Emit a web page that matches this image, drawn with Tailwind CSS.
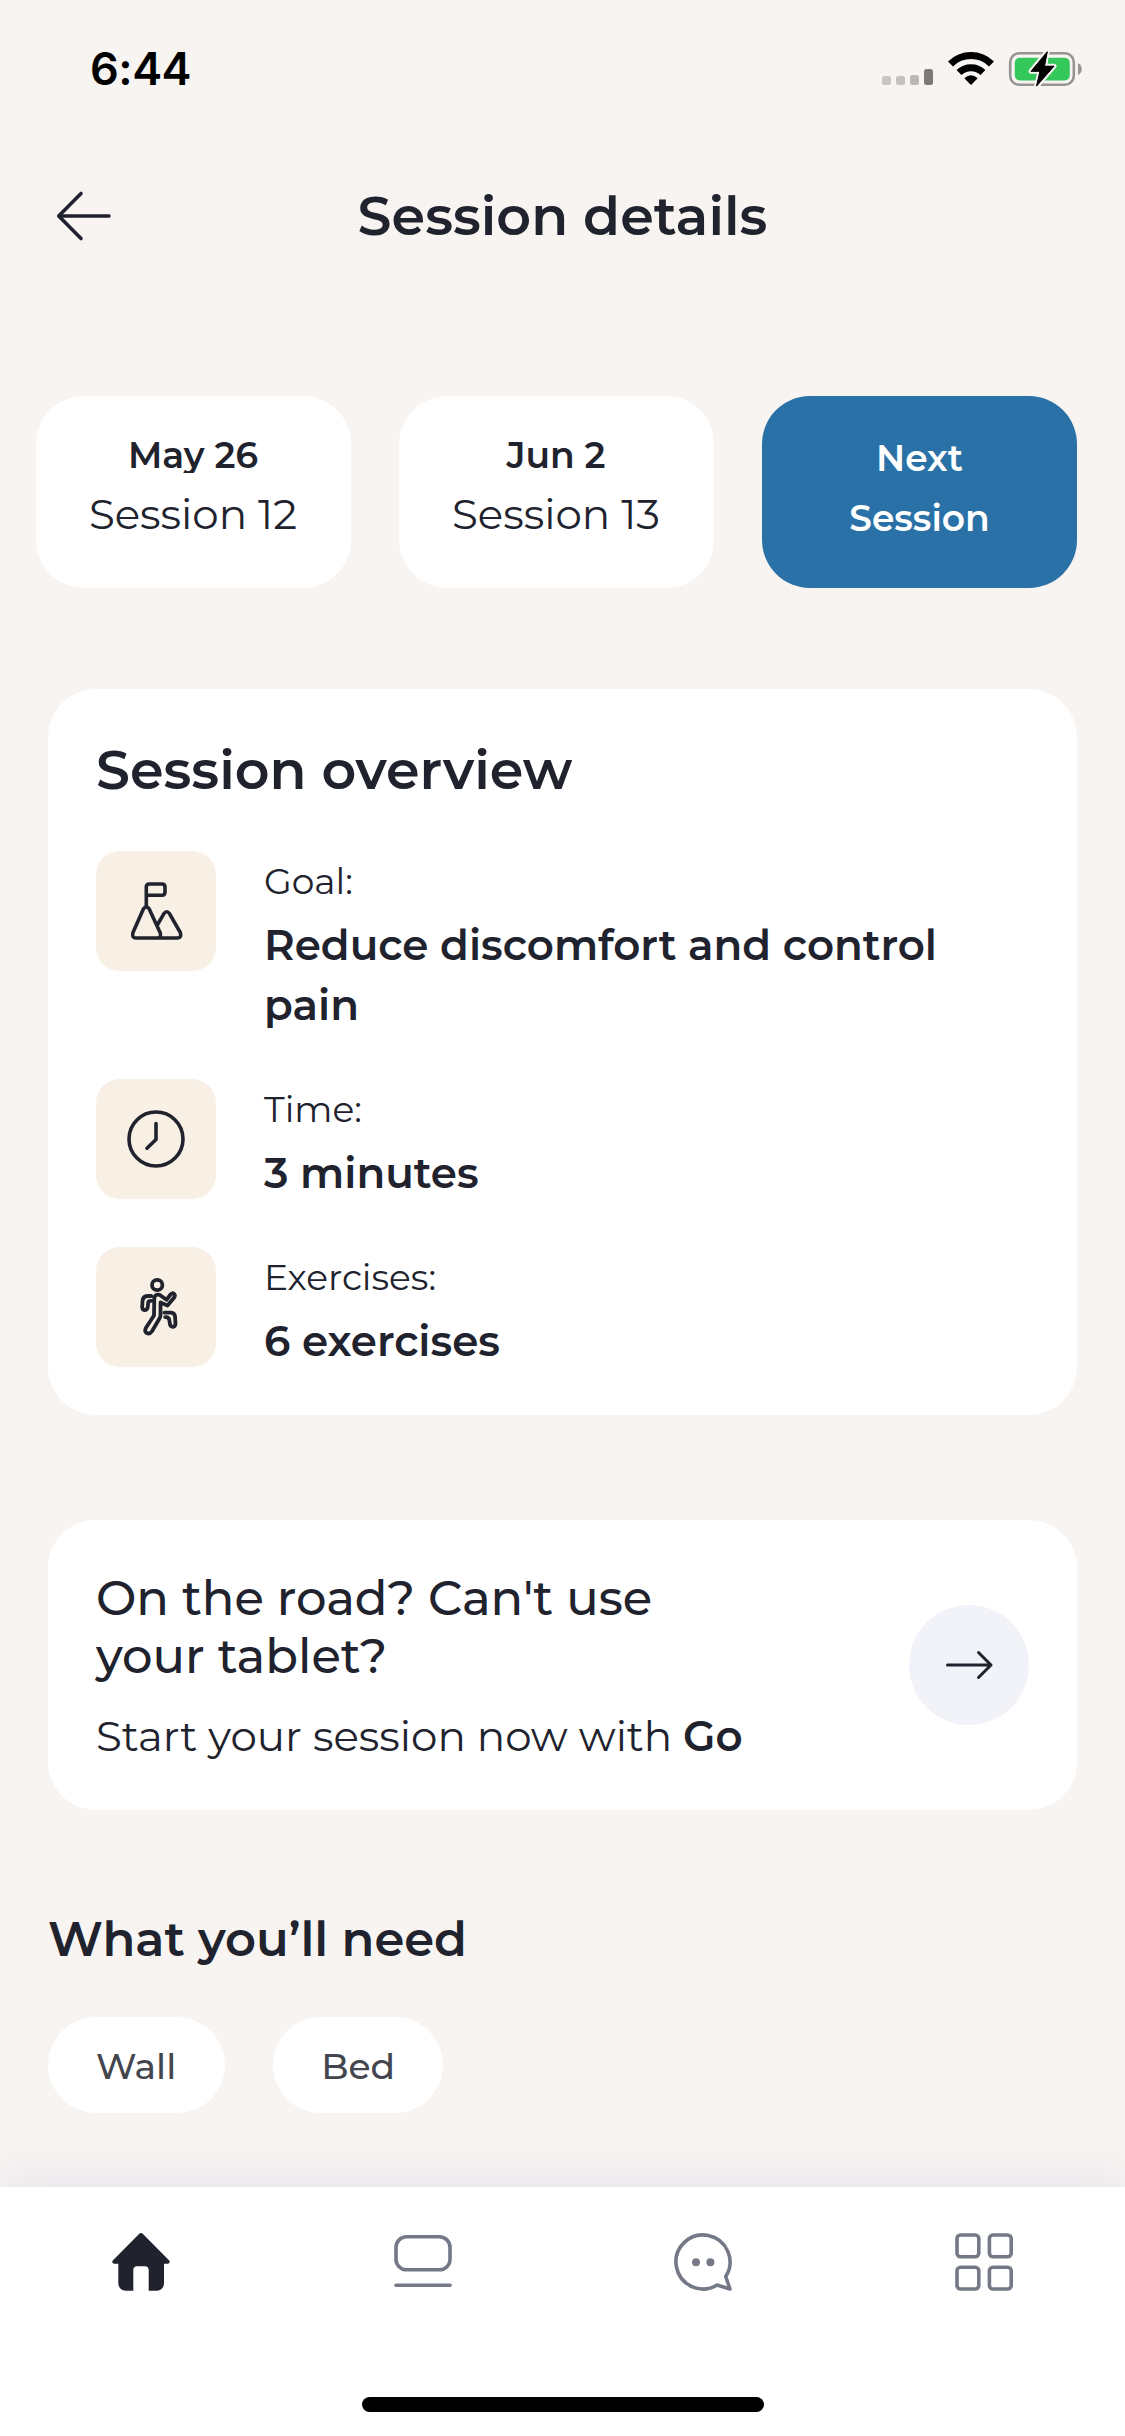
<!DOCTYPE html>
<html lang="en">
<head>
<meta charset="utf-8">
<title>Session details</title>
<script src="https://cdn.jsdelivr.net/npm/@tailwindcss/browser@4"></script>
</head>
<body class="bg-[#f7f4f2]">
<div class="w-[1125px] h-[2436px] flex flex-col overflow-hidden bg-[#f7f4f2] text-[#20222d] font-['Montserrat','Inter',sans-serif]">

  <!-- Status bar -->
  <div class="h-[132px] shrink-0 flex items-start justify-between pl-[90px] pr-[41px]">
    <div class="mt-[39px] text-[45px] leading-[60px] font-semibold tracking-[-0.5px] text-black font-['Inter',sans-serif]">6:44</div>
    <svg class="mt-[50px]" width="204" height="38" viewBox="880 50 204 38" fill="none">
      <rect x="882" y="76" width="9" height="9" rx="2.5" fill="#c8c5c4"/>
      <rect x="896" y="76" width="9" height="9" rx="2.5" fill="#c4c1c0"/>
      <rect x="910" y="75" width="9" height="10" rx="2.5" fill="#bbb8b7"/>
      <rect x="924" y="69" width="9" height="16" rx="2.5" fill="#7c7a79"/>
      <path d="M950.5 64A29 29 0 0 1 991.5 64M959 72.5A17.5 17.5 0 0 1 983 72.5" stroke="#000" stroke-width="7"/>
      <path d="M971 85L964.3 78.3Q971 72 977.7 78.3Z" fill="#000"/>
      <rect x="1010.2" y="53.2" width="63.6" height="31.6" rx="9" stroke="#979594" stroke-width="2.6"/>
      <path d="M1078 63.2A6.5 6.5 0 0 1 1078 75Z" fill="#979594"/>
      <rect x="1014.8" y="57.8" width="55" height="22.6" rx="5" fill="#34c759"/>
      <path d="M1047.3 51.5L1031 71.3H1040L1036.5 86.5L1054 66.2H1044.5Z" fill="#000" stroke="#f7f4f2" stroke-width="5" stroke-linejoin="round" paint-order="stroke"/>
      <path d="M1047.3 51.8L1031 71.3H1040L1036.5 86L1054 66.2H1044.5Z" fill="#000" stroke="#000" stroke-width="1" stroke-linejoin="round"/>
    </svg>
  </div>

  <!-- Header -->
  <header class="h-[168px] shrink-0 grid grid-cols-[120px_1fr_120px] items-center">
    <svg class="ml-12" width="72" height="72" viewBox="0 0 72 72" fill="none" stroke="currentColor" stroke-width="3.6" stroke-linecap="round" stroke-linejoin="round"><path d="M61 36H11M33 13.5L10.7 36L33 58.5"/></svg>
    <h1 class="text-center text-[54px] leading-[66px] font-semibold">Session details</h1>
  </header>

  <!-- Session picker -->
  <div class="mt-24 h-48 shrink-0 flex gap-12 px-9 text-center">
    <div class="w-[315px] rounded-[48px] bg-white pt-[41px] pr-px">
      <div class="h-9 overflow-hidden text-[36px] leading-[36px] font-semibold">May 26</div>
      <div class="mt-[11px] text-[42px] leading-[60px] font-normal">Session 12</div>
    </div>
    <div class="w-[315px] rounded-[48px] bg-white pt-[41px] pr-px">
      <div class="h-9 overflow-hidden text-[36px] leading-[36px] font-semibold">Jun 2</div>
      <div class="mt-[11px] text-[42px] leading-[60px] font-normal">Session 13</div>
    </div>
    <div class="w-[315px] rounded-[48px] bg-[#2971a7] px-12 pt-8 text-[36px] leading-[60px] font-semibold text-white">Next Session</div>
  </div>

  <!-- Overview -->
  <section class="mt-[101px] mx-12 h-[726px] shrink-0 rounded-[48px] bg-white p-12">
    <h2 class="text-[54px] leading-[66px] font-semibold">Session overview</h2>
    <div class="mt-12 flex flex-col gap-12">
      <div class="h-[180px] flex gap-12">
        <div class="size-[120px] shrink-0 rounded-3xl bg-[#f8f0e4] flex items-center justify-center">
          <svg width="72" height="72" viewBox="0 0 72 72" fill="none" stroke="currentColor" stroke-width="3.6" stroke-linecap="round" stroke-linejoin="round"><path d="M26.3 32V12Q26.3 9 29.3 9H42Q45 9 45 12V17.2Q45 20.2 42 20.2H26.5M23.6 33.6L13 57.5Q11.6 62.8 16 63H37Q41.5 62.8 40.3 58L29 33.6Q26.3 30.3 23.6 33.6ZM37.3 50L43.8 38.8Q46.7 34.7 49.6 38.8L60.3 57.5Q62 62.6 57.5 63H37"/></svg>
        </div>
        <div class="leading-[60px]">
          <div class="text-[36px] font-normal">Goal:</div>
          <div class="mt-1 text-[42px] font-semibold">Reduce discomfort and control pain</div>
        </div>
      </div>
      <div class="h-[120px] flex gap-12">
        <div class="size-[120px] shrink-0 rounded-3xl bg-[#f8f0e4] flex items-center justify-center">
          <svg width="72" height="72" viewBox="0 0 72 72" fill="none" stroke="currentColor" stroke-width="3.6" stroke-linecap="round" stroke-linejoin="round"><circle cx="36" cy="36" r="27"/><path d="M36 20.5V36.5L27 45.3"/></svg>
        </div>
        <div class="leading-[60px]">
          <div class="text-[36px] font-normal">Time:</div>
          <div class="mt-1 text-[42px] font-semibold">3 minutes</div>
        </div>
      </div>
      <div class="h-[120px] flex gap-12">
        <div class="size-[120px] shrink-0 rounded-3xl bg-[#f8f0e4] flex items-center justify-center">
          <svg width="72" height="72" viewBox="0 0 72 72" fill="none" stroke="currentColor" stroke-width="3.8" stroke-linecap="round" stroke-linejoin="round"><circle cx="37.2" cy="14" r="5.2"/><path d="M34.3 27Q35 22.8 39.5 23.8L46.5 28.8L50.5 23.5Q52.5 21.3 54.2 23Q55.6 24.6 54 26.8L47.5 34.5L40.5 31.5V44.5Q40.3 46.5 39 48.3L32 60.3Q29.6 63.8 26.3 61.8Q24.3 60 25.8 57L34 44.5ZM31.2 25H27.5Q23 25.2 22.5 30L22.2 36.2Q22.6 39.2 25 39.2Q27.6 38.8 27.8 35.5L28.2 31.5Q28.6 29.6 31 29.8M44.5 41.7H51Q54.8 42 55.1 45.8L55.5 52.8Q55.2 55.8 52.6 55.8Q49.9 55.4 49.8 52L49.2 48.5Q48.6 46 45.2 46.2"/></svg>
        </div>
        <div class="leading-[60px]">
          <div class="text-[36px] font-normal">Exercises:</div>
          <div class="mt-1 text-[42px] font-semibold">6 exercises</div>
        </div>
      </div>
    </div>
  </section>

  <!-- Go banner -->
  <section class="mt-[105px] mx-12 h-[290px] shrink-0 rounded-[48px] bg-white px-12 flex items-center justify-between">
    <div class="w-[700px] pt-1">
      <div class="w-[600px] text-[48px] leading-[58px] font-medium">On the road? Can't use your tablet?</div>
      <div class="mt-[21px] text-[42px] leading-[60px] font-normal">Start your session now with <b class="font-semibold">Go</b></div>
    </div>
    <div class="size-[120px] rounded-full bg-[#f2f3f8] flex items-center justify-center">
      <svg width="60" height="60" viewBox="0 0 60 60" fill="none" stroke="currentColor" stroke-width="3" stroke-linecap="round" stroke-linejoin="round"><path d="M8.5 30H52M39.5 17.5L52 30L39.5 42.5"/></svg>
    </div>
  </section>

  <!-- Equipment -->
  <section class="mt-[99px] mx-12 h-[278px] shrink-0">
    <h2 class="text-[48px] leading-[60px] font-semibold">What you’ll need</h2>
    <div class="mt-12 flex gap-12 text-[36px] leading-[98px] font-medium text-[#43454f]">
      <div class="h-24 rounded-full bg-white pl-12 pr-[49px]">Wall</div>
      <div class="h-24 rounded-full bg-white px-12">Bed</div>
    </div>
  </section>

  <!-- Tab bar -->
  <nav class="h-[249px] shrink-0 flex flex-col items-center bg-white shadow-[0_-6px_48px_rgba(110,110,200,0.12)]">
    <div class="mt-[39px] w-full grid grid-cols-4 justify-items-center text-[#757987]">
      <svg class="text-[#20222d]" width="72" height="72" viewBox="0 0 72 72" fill="currentColor"><path d="M34.5 7.6Q36 6.2 37.5 7.6L64.2 34.4Q65.8 37 63 37.7H59V57.5Q58.6 64 52 64.7H43.7V44Q43.6 40.4 40 40.3H32Q28.4 40.4 28.3 44V64.7H20.5Q13.8 64 13.3 57.5V37.7H9Q6.2 37 7.8 34.4Z"/></svg>
      <svg class="ml-0.5" width="72" height="72" viewBox="0 0 72 72" fill="none" stroke="currentColor" stroke-width="3.6" stroke-linecap="round"><rect x="9" y="10.8" width="54" height="33" rx="10.5"/><path d="M9 59.3H63"/></svg>
      <svg width="72" height="72" viewBox="0 0 72 72" fill="none" stroke="currentColor" stroke-width="3.6" stroke-linejoin="round"><path d="M50 59A27 27 0 1 1 58.7 50.5L63 63Z"/><circle cx="29" cy="36.3" r="4" fill="currentColor" stroke="none"/><circle cx="43.4" cy="36.3" r="4" fill="currentColor" stroke="none"/></svg>
      <svg width="72" height="72" viewBox="0 0 72 72" fill="none" stroke="currentColor" stroke-width="3.6"><rect x="9" y="9" width="21.8" height="21.8" rx="3.6"/><rect x="41.4" y="9" width="21.8" height="21.8" rx="3.6"/><rect x="9" y="41.2" width="21.8" height="21.8" rx="3.6"/><rect x="41.4" y="41.2" width="21.8" height="21.8" rx="3.6"/></svg>
    </div>
    <div class="mt-[99px] w-[402px] h-[15px] rounded-full bg-black"></div>
  </nav>
</div>
</body>
</html>
